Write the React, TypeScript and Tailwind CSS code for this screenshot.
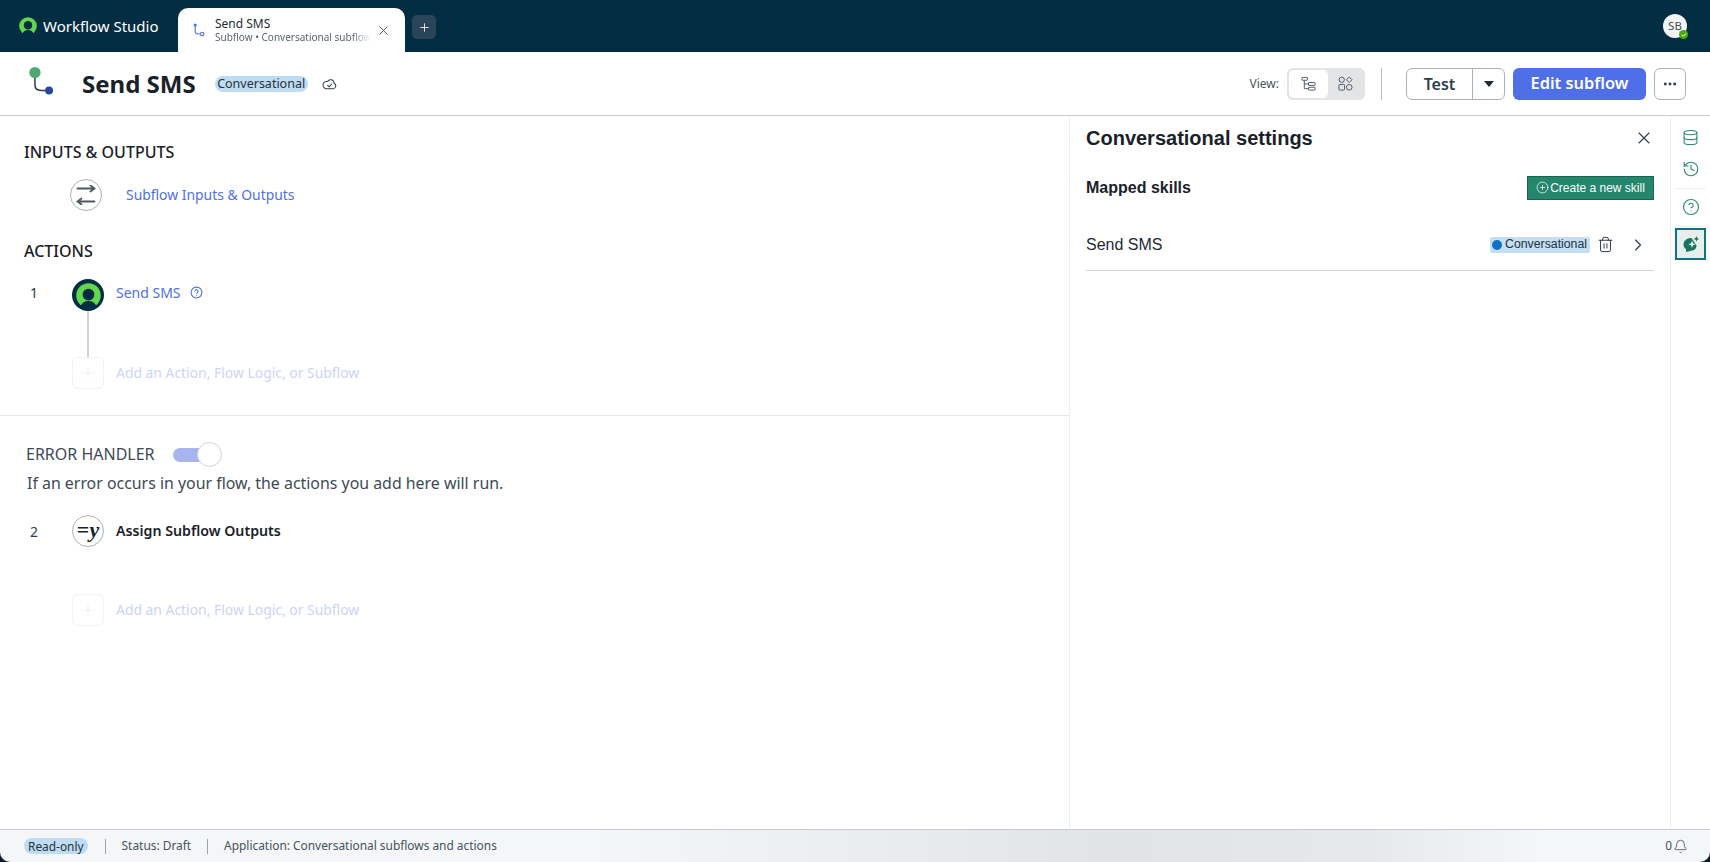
import { X, Plus, Ellipsis, ChevronRight, Trash2, Database, History, CircleHelp, CirclePlus, Bell, Check } from "lucide-react";

const noto = "font-['Noto_Sans',sans-serif]";
const arial = "font-['Liberation_Sans',Arial,sans-serif]";

function BrandRing({ className = "" }: { className?: string }) {
  return (
    <svg viewBox="0 0 20 20" className={className} fill="none">
      <circle cx="10" cy="10" r="9.8" fill="#62d84e" />
      <circle cx="10" cy="9.2" r="4.7" fill="#032d42" />
      <path d="M3.6 18.6 A7 7 0 0 1 16.4 18.6 L16.4 20 L3.6 20 Z" fill="#032d42" />
    </svg>
  );
}

function SubflowGlyph({ className = "" }: { className?: string }) {
  return (
    <svg viewBox="0 0 12 14" className={className} fill="none" stroke="#4f6fe8" strokeWidth="1.1">
      <circle cx="2.2" cy="2" r="1" fill="#4f6fe8" />
      <path d="M2.2 3 V8.5 Q2.2 11 5 11 H7.5" />
      <circle cx="9.2" cy="11" r="1.7" />
    </svg>
  );
}

function TreeViewIcon() {
  return (
    <svg viewBox="0 0 16 16" className="w-[15px] h-[15px]" fill="none" stroke="#4b5563" strokeWidth="1">
      <rect x="1" y="1.5" width="6" height="3" rx="0.5" />
      <rect x="8" y="7" width="7" height="3" rx="0.5" />
      <rect x="8" y="12" width="7" height="3" rx="0.5" />
      <path d="M3.5 4.5 V13.5 H8 M3.5 8.5 H8" />
    </svg>
  );
}

function CardViewIcon() {
  return (
    <svg viewBox="0 0 16 16" className="w-[15px] h-[15px]" fill="none" stroke="#4b5563" strokeWidth="1">
      <circle cx="4" cy="4" r="2.8" />
      <path d="M12 1 L15 4 L12 7 L9 4 Z" />
      <rect x="1" y="9" width="6" height="6" rx="1" />
      <circle cx="12" cy="12" r="3" />
    </svg>
  );
}

function SwapIcon() {
  return (
    <svg viewBox="0 0 20 20" className="w-[20px] h-[20px]" fill="none" stroke="#4b5a5c" strokeWidth="1.8" strokeLinecap="round">
      <path d="M1.5 3.5 H18.5 M14.5 0.5 L18.5 3.5 L14.5 6.5" />
      <path d="M18.5 16.5 H1.5 M5.5 13.5 L1.5 16.5 L5.5 19.5" />
    </svg>
  );
}

function CloudCheck() {
  return (
    <svg viewBox="0 0 16 12" className="w-[15px] h-[12px]" fill="none" stroke="#2e3d49" strokeWidth="1.1" strokeLinejoin="round">
      <path d="M4 11 H12 A3 3 0 0 0 12.8 5.2 A3.6 3.6 0 0 0 6 3.4 A3.8 3.8 0 0 0 4 11 Z" />
      <path d="M6 7.5 L7.6 9 L10.4 6" strokeLinecap="round" />
    </svg>
  );
}

function SparkChat() {
  return (
    <svg viewBox="0 0 18 18" className="w-[18px] h-[18px]">
      <path d="M9.5 3 A6.8 6.8 0 0 0 1.5 9.4 C1.5 11.6 2.6 13 4 14 L4.2 17 L9.2 15.8 A6 6 0 0 0 14.6 10.5 Z" fill="#18735f" />
      <path d="M14.4 1 L15.2 3.1 L17.2 3.9 L15.2 4.7 L14.4 6.8 L13.6 4.7 L11.6 3.9 L13.6 3.1 Z" fill="#18735f" />
      <path d="M10 5.4 L11 8.2 L13.8 9.2 L11 10.2 L10 13 L9 10.2 L6.2 9.2 L9 8.2 Z" fill="#e8f0ee" />
    </svg>
  );
}

function AddRow() {
  return (
    <div className="flex items-center">
      <div className="w-8 h-8 rounded-md border border-[#eff1fb] flex items-center justify-center text-[#e6e9f8]">
        <Plus size={18} strokeWidth={1} />
      </div>
      <span className="ml-3 text-[13.9px] text-[#ccd4f8]">Add an Action, Flow Logic, or Subflow</span>
    </div>
  );
}

function RailButton({ children }: { children: React.ReactNode }) {
  return <div className="h-[32px] flex items-center justify-center text-[#2a8a72]">{children}</div>;
}

export default function App() {
  return (
    <div className={`h-screen w-full flex flex-col overflow-hidden bg-white text-[#1f2a33] ${noto}`}>
      {/* tab strip */}
      <div className="h-[52px] shrink-0 bg-[#032d42] flex items-end pl-[19px] pr-[23px]">
        <div className="h-[52px] w-[159px] flex items-center gap-[6px]">
          <BrandRing className="w-[18px] h-[18px]" />
          <span className="text-[15px] text-white">Workflow Studio</span>
        </div>
        <div className="relative h-[44px] w-[227px] bg-white rounded-t-[10px] flex items-center pl-[15px] pr-[14px]">
          <SubflowGlyph className="w-[12px] h-[14px]" />
          <div className="ml-[10px] w-[156px] overflow-hidden whitespace-nowrap leading-none">
            <div className="text-[12px] leading-[15px] text-[#1f2a33]">Send SMS</div>
            <div className="text-[10px] leading-[13px] text-[#5b6670] [mask-image:linear-gradient(to_right,black_88%,transparent)]">Subflow • Conversational subflows</div>
          </div>
          <X size={15} strokeWidth={1.5} className="ml-auto text-[#4b5563]" />
        </div>
        <div className="self-center ml-[7px] mt-[2px] w-[24px] h-[24px] rounded-[5px] bg-[#2b4558] flex items-center justify-center text-white">
          <Plus size={13} strokeWidth={1.5} />
        </div>
        <div className="relative self-center ml-auto w-[24px] h-[24px] rounded-full bg-[#f3f4f5] flex items-center justify-center text-[11.5px] text-[#444f58]">
          SB
          <span className="absolute right-[-1px] bottom-[-1px] w-[9px] h-[9px] rounded-full bg-[#4ca90c] flex items-center justify-center text-white">
            <Check size={6} strokeWidth={4} />
          </span>
        </div>
      </div>

      {/* flow header */}
      <div className="h-[64px] shrink-0 border-b border-[#c5ccd3] flex items-center pl-[28px] pr-[24px]">
        <svg viewBox="0 0 28 34" className="w-[28px] h-[32px] mb-[3px]" fill="none">
          <path d="M6.5 12 V20 Q6.5 26 13 26 H20" stroke="#2e3d49" strokeWidth="1.6" />
          <circle cx="6.5" cy="7" r="6" fill="#4fa86f" />
          <circle cx="21.5" cy="26" r="4.2" fill="#26459e" />
        </svg>
        <span className="ml-[26px] text-[24px] font-bold text-[#1a2229]">Send SMS</span>
        <span className="ml-[19px] h-[16px] w-[93px] rounded-full bg-[#bfdcf2] text-[12.5px] leading-[16px] text-center text-[#24323d]">Conversational</span>
        <span className="ml-[14px] flex"><CloudCheck /></span>

        <div className="ml-auto flex items-center">
          <span className="text-[12px] text-[#4b5660]">View:</span>
          <div className="ml-[8px] h-[32px] w-[78px] rounded-[6px] bg-[#e2e4e6] flex items-center p-[2px]">
            <div className="w-[39px] h-[28px] rounded-[5px] bg-white flex items-center justify-center"><TreeViewIcon /></div>
            <div className="flex-1 flex items-center justify-center"><CardViewIcon /></div>
          </div>
          <div className="ml-[16px] w-px h-[32px] bg-[#b8c0c6]" />
          <div className="ml-[24px] h-[32px] w-[99px] rounded-[6px] border border-[#aab3bb] flex items-stretch">
            <div className="flex-1 flex items-center justify-center text-[16px] font-semibold text-[#2e3d49]">Test</div>
            <div className="w-[32px] border-l border-[#aab3bb] flex items-center justify-center">
              <span className="w-0 h-0 border-x-[5px] border-x-transparent border-t-[6px] border-t-[#1f2a33]" />
            </div>
          </div>
          <div className="ml-[8px] h-[32px] w-[133px] rounded-[6px] bg-[#4f6fe8] text-white text-[16.4px] font-semibold flex items-center justify-center">Edit subflow</div>
          <div className="ml-[8px] h-[32px] w-[32px] rounded-[6px] border border-[#aab3bb] flex items-center justify-center text-[#2e3d49]">
            <Ellipsis size={16} strokeWidth={2.4} />
          </div>
        </div>
      </div>

      {/* body */}
      <div className="flex-1 min-h-0 flex">
        {/* flow canvas */}
        <div className="w-[1070px] shrink-0 border-r border-[#eef0f2] flex flex-col">
          <div className="h-[300px] shrink-0 border-b border-[#e4e6e8] pl-[24px] pt-[26px]">
            <div className="text-[16px] font-medium leading-[20px] text-[#1a2229]">INPUTS &amp; OUTPUTS</div>
            <div className="mt-[17px] ml-[46px] flex items-center">
              <div className="w-[32px] h-[32px] rounded-full border border-[#aab3bb] flex items-center justify-center"><SwapIcon /></div>
              <span className="ml-[24px] text-[13.9px] text-[#4f6fe8]">Subflow Inputs &amp; Outputs</span>
            </div>
            <div className="mt-[30px] text-[16px] font-medium leading-[20px] text-[#1a2229]">ACTIONS</div>
            <div className="mt-[18px] flex items-center">
              <span className="w-[48px] pl-[6px] text-[14px] text-[#2e3d49] mb-[6px]">1</span>
              <div className="w-[32px] h-[32px] rounded-full bg-[#032d42] flex items-center justify-center"><BrandRing className="w-[25px] h-[25px]" /></div>
              <span className="ml-[12px] text-[14px] text-[#4f6fe8] mb-[6px]">Send SMS</span>
              <CircleHelp size={13} strokeWidth={2} className="ml-[9px] text-[#4f6fe8] mb-[6px]" />
            </div>
            <div className="ml-[63px] w-[2px] h-[46px] bg-[#cfd3d6]" />
            <div className="ml-[48px]"><AddRow /></div>
          </div>

          <div className="pl-[26px] pt-[26px]">
            <div className="flex items-center">
              <span className="text-[16px] leading-[25px] text-[#3d4a55]">ERROR HANDLER</span>
              <div className="relative ml-[18px] w-[49px] h-[25px] flex items-center">
                <div className="w-[42px] h-[14px] rounded-full bg-[#a6b5f0]" />
                <div className="absolute right-0 top-0 w-[25px] h-[25px] rounded-full bg-white border border-[#cfd3d6]" />
              </div>
            </div>
            <div className="mt-[4px] ml-px text-[15.9px] leading-[24px] text-[#3d4a55]">If an error occurs in your flow, the actions you add here will run.</div>
            <div className="mt-[20px] -ml-[2px] pl-0 flex items-center">
              <span className="w-[48px] pl-[6px] text-[14px] text-[#2e3d49]">2</span>
              <div className="w-[32px] h-[32px] rounded-full border border-[#aab3bb] flex items-center justify-center font-['Liberation_Serif',serif] font-bold text-[22px] text-[#1a2229] leading-none pb-[3px]">
                =<i>y</i>
              </div>
              <span className="ml-[12px] text-[14.2px] font-semibold text-[#1a2229]">Assign Subflow Outputs</span>
            </div>
            <div className="mt-[47px] ml-[46px]"><AddRow /></div>
          </div>
        </div>

        {/* conversational settings */}
        <div className={`flex-1 pl-[16px] pr-[16px] ${arial}`}>
          <div className="flex items-center justify-between h-[44px]">
            <span className="text-[20px] font-bold text-[#1a2229]">Conversational settings</span>
            <X size={20} strokeWidth={1.3} className="text-[#2e3d49]" />
          </div>
          <div className="mt-[16px] flex items-center justify-between">
            <span className="text-[16px] font-bold text-[#1a2229]">Mapped skills</span>
            <div className="h-[24px] w-[127px] bg-[#23866d] border border-[#186452] text-white text-[12px] flex items-center justify-center gap-[1px] pb-px">
              <CirclePlus size={13} strokeWidth={1.4} />
              Create a new skill
            </div>
          </div>
          <div className="mt-[19px] h-[52px] border-b border-[#cfd6d8] flex items-center">
            <span className="text-[16px] text-[#1f2a33]">Send SMS</span>
            <div className="ml-auto h-[16px] w-[100px] rounded-[2px] bg-[#c4dff3] flex items-center pl-[2px] gap-[3px] text-[12.3px] text-[#24323d]">
              <span className="w-[10px] h-[10px] rounded-full bg-[#0f72c7]" />
              Conversational
            </div>
            <Trash2 size={17} strokeWidth={1.4} className="ml-[7px] text-[#2e3d49]" />
            <ChevronRight size={20} strokeWidth={1.4} className="ml-[14px] mr-[6px] text-[#2e3d49]" />
          </div>
        </div>

        {/* right rail */}
        <div className="w-[40px] shrink-0 border-l border-[#eef0f2] flex flex-col items-stretch px-[4px] pt-[5px]">
          <RailButton><Database size={17} strokeWidth={1.5} /></RailButton>
          <RailButton><History size={18} strokeWidth={1.5} /></RailButton>
          <div className="mt-[3px] h-px bg-[#eef0f2]" />
          <div className="mt-[2px]"><RailButton><CircleHelp size={18} strokeWidth={1.5} /></RailButton></div>
          <div className="mt-[3px] h-px bg-[#eef0f2]" />
          <div className="mt-[1px] h-[32px] border-2 border-[#0f7386] bg-[#e6efec] flex items-center justify-center"><SparkChat /></div>
        </div>
      </div>

      {/* status bar */}
      <div className="shrink-0 bg-[#0b1c30]">
        <div className="h-[33px] border-t border-[#c5ccd3] bg-[linear-gradient(to_right,#f4f6f8_35%,#e2e3e4_65%,#e7e8e9_80%,#f4f6f8_90%)] rounded-b-[10px] flex items-center pl-[24px] pr-[22px] text-[11.9px] text-[#46525c]">
          <span className="h-[16px] px-[4px] rounded-full bg-[#bfdcf2] leading-[16px] text-[#24323d]">Read-only</span>
          <span className="ml-[17px] w-px h-[15px] bg-[#9aa4ac]" />
          <span className="ml-[16px]">Status: Draft</span>
          <span className="ml-[16px] w-px h-[15px] bg-[#9aa4ac]" />
          <span className="ml-[16px]">Application: Conversational subflows and actions</span>
          <span className="ml-auto">0</span>
          <Bell size={15} strokeWidth={1.3} className="ml-[1px]" />
        </div>
      </div>
    </div>
  );
}
